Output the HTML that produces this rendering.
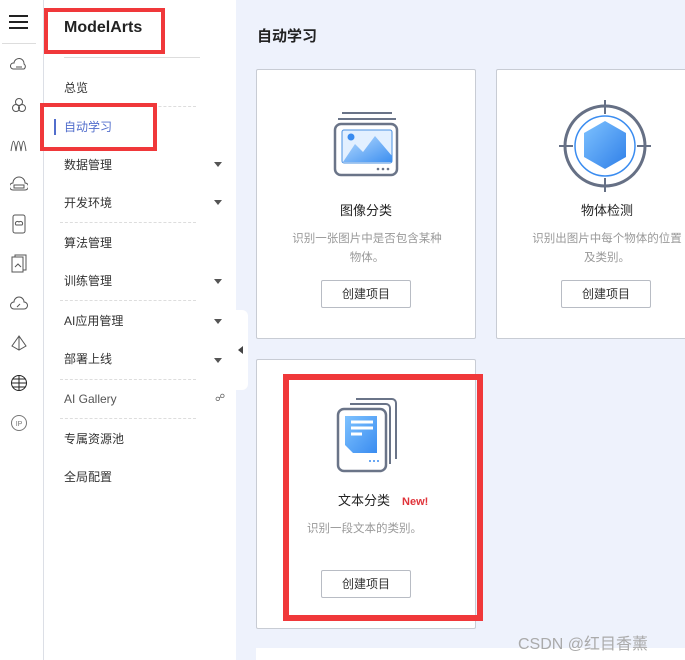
<!DOCTYPE html>
<html><head><meta charset="utf-8"><style>
*{margin:0;padding:0;box-sizing:border-box}
body{width:685px;height:660px;overflow:hidden;position:relative;background:#eef2fc;font-family:"Liberation Sans","Noto Sans CJK SC",sans-serif}
.abs{position:absolute}
.rail{left:0;top:0;width:44px;height:660px;background:#fff;border-right:1px solid #dcdfe6}
.side{left:44px;top:0;width:192px;height:660px;background:#fff}
.mi{position:absolute;left:64px;font-size:12px;color:#333;line-height:16px}
.arr{position:absolute;left:214px;width:0;height:0;border-left:4px solid transparent;border-right:4px solid transparent;border-top:5px solid #555}
.dash{position:absolute;left:60px;width:136px;border-top:1px dashed #ddd}
.card{position:absolute;background:#fff;border:1px solid #c8ccd4;border-radius:2px}
.ct{position:absolute;width:100%;text-align:center;font-size:13px;color:#222}
.cd{position:absolute;text-align:center;font-size:11.5px;color:#999;line-height:19px}
.btn{position:absolute;width:90px;height:28px;border:1px solid #b8bcc4;border-radius:2px;font-size:12px;color:#333;text-align:center;line-height:26px;background:#fff}
.red{position:absolute;border:4px solid #f0383a}
.ic{position:absolute;left:10px}
</style></head><body>
<div class="abs rail">
 <div class="abs" style="left:9px;top:15px;width:19px;height:2px;background:#222"></div>
 <div class="abs" style="left:9px;top:21px;width:19px;height:2px;background:#222"></div>
 <div class="abs" style="left:9px;top:27px;width:19px;height:2px;background:#222"></div>
 <div class="abs" style="left:2px;top:43px;width:34px;border-top:1px solid #ddd"></div>
 <svg class="ic" style="top:56px" width="18" height="18" viewBox="0 0 18 18" fill="none" stroke="#555"><path d="M3 13a3 3 0 0 1 1-6 5 5 0 0 1 10 1 3 3 0 0 1 0 5z"/><path d="M6 11h6"/></svg>
 <svg class="ic" style="top:96px" width="18" height="18" viewBox="0 0 18 18" fill="none" stroke="#555"><circle cx="9" cy="6" r="3.5"/><circle cx="6" cy="12" r="3.5"/><circle cx="12" cy="12" r="3.5"/></svg>
 <svg class="ic" style="top:136px" width="18" height="18" viewBox="0 0 18 18" fill="none" stroke="#555"><path d="M1 15C3 2 4 2 6 15C8 2 9 2 11 15C13 2 14 2 16 15"/></svg>
 <svg class="ic" style="top:176px" width="18" height="18" viewBox="0 0 18 18" fill="none" stroke="#555"><path d="M3 14a3 3 0 0 1 0-7 6 6 0 0 1 12 0 3 3 0 0 1 0 7z"/><rect x="4" y="9" width="10" height="3"/></svg>
 <svg class="ic" style="top:214px" width="18" height="20" viewBox="0 0 18 20" fill="none" stroke="#555"><rect x="3" y="1" width="12" height="18" rx="2"/><path d="M6 11a2 2 0 0 1 3-3 2 2 0 0 1 3 3z"/></svg>
 <svg class="ic" style="top:254px" width="18" height="20" viewBox="0 0 18 20" fill="none" stroke="#555"><rect x="2" y="3" width="11" height="15"/><path d="M5 3V1h11v15h-3"/><path d="M5 13l3-3 3 3"/></svg>
 <svg class="ic" style="top:295px" width="18" height="18" viewBox="0 0 18 18" fill="none" stroke="#555"><path d="M4 14a3 3 0 0 1 0-7 5 5 0 0 1 10 0 3 3 0 0 1 0 7z"/><path d="M7 12l3-3"/></svg>
 <svg class="ic" style="top:334px" width="18" height="18" viewBox="0 0 18 18" fill="none" stroke="#555"><path d="M9 2L2 12l7 4 7-4z"/><path d="M9 2v14"/></svg>
 <svg class="ic" style="top:374px" width="18" height="18" viewBox="0 0 18 18" fill="none" stroke="#222"><circle cx="9" cy="9" r="7.5"/><path d="M1.5 9h15M9 1.5v15M3 5h12M3 13h12"/></svg>
 <svg class="ic" style="top:414px" width="18" height="18" viewBox="0 0 18 18" fill="none" stroke="#777"><circle cx="9" cy="9" r="7.5"/><text x="9" y="12" font-size="7" text-anchor="middle" fill="#777" stroke="none" font-family="Liberation Sans">IP</text></svg>
</div>
<div class="abs side"></div>
<div class="abs" style="left:64px;top:19px;font-size:16px;font-weight:bold;color:#222">ModelArts</div>
<div class="abs" style="left:64px;top:57px;width:136px;border-top:1px solid #ddd"></div>
<div class="mi" style="top:80px">总览</div>
<div class="dash" style="top:106px"></div>
<div class="abs" style="left:54px;top:119px;width:2px;height:16px;background:#526ecc"></div>
<div class="mi" style="top:119px;color:#526ecc">自动学习</div>
<div class="mi" style="top:157px">数据管理</div><div class="arr" style="top:162px"></div>
<div class="mi" style="top:195px">开发环境</div><div class="arr" style="top:200px"></div>
<div class="dash" style="top:222px"></div>
<div class="mi" style="top:235px">算法管理</div>
<div class="mi" style="top:273px">训练管理</div><div class="arr" style="top:279px"></div>
<div class="dash" style="top:300px"></div>
<div class="mi" style="top:313px">AI应用管理</div><div class="arr" style="top:319px"></div>
<div class="mi" style="top:351px">部署上线</div><div class="arr" style="top:358px"></div>
<div class="dash" style="top:379px"></div>
<div class="mi" style="top:391px;color:#555">AI Gallery</div>
<div class="abs" style="left:215px;top:393px;font-size:10px;color:#666">&#9741;</div>
<div class="dash" style="top:418px"></div>
<div class="mi" style="top:431px">专属资源池</div>
<div class="mi" style="top:469px">全局配置</div>
<div class="abs" style="left:232px;top:310px;width:16px;height:80px;background:#fff;border-radius:0 6px 6px 0"></div>
<div class="abs" style="left:238px;top:346px;width:0;height:0;border-top:4px solid transparent;border-bottom:4px solid transparent;border-right:5px solid #444"></div>

<div class="abs" style="left:257px;top:25px;font-size:15px;font-weight:bold;color:#222">自动学习</div>

<div class="card" style="left:256px;top:69px;width:220px;height:270px">
 <svg class="abs" style="left:76px;top:42px" width="66" height="68" viewBox="0 0 66 68"><defs><linearGradient id="g" x1="0" y1="0" x2="1" y2="1"><stop offset="0" stop-color="#b8dcff"/><stop offset="1" stop-color="#3d8ff0"/></linearGradient></defs>
  <path d="M9 1h50M5 7h58" stroke="#6a7488" stroke-width="2"/>
  <rect x="2" y="12" width="62" height="51" rx="6" fill="#fff" stroke="#6a7488" stroke-width="2.5"/>
  <rect x="9" y="18" width="50" height="33" rx="2" fill="#e3f0ff" stroke="#4a90e2"/>
  <path d="M10 50L22 32l8 8 12-16 17 20v6z" fill="url(#g)"/>
  <circle cx="18" cy="25" r="3.5" fill="#3a8cf0"/>
  <circle cx="45" cy="57" r="1.3" fill="#6a7488"/><circle cx="50" cy="57" r="1.3" fill="#6a7488"/><circle cx="55" cy="57" r="1.3" fill="#6a7488"/></svg>
 <div class="ct" style="top:130px">图像分类</div>
 <div class="cd" style="top:160px;left:30px;width:160px">识别一张图片中是否包含某种物体。</div>
 <div class="btn" style="left:64px;top:210px">创建项目</div>
</div>

<div class="card" style="left:496px;top:69px;width:200px;height:270px">
 <svg class="abs" style="left:62px;top:30px" width="92" height="92" viewBox="0 0 92 92">
  <defs><linearGradient id="c" x1="0" y1="0" x2="1" y2="1"><stop offset="0" stop-color="#7ec2ff"/><stop offset="1" stop-color="#2f7fe8"/></linearGradient></defs>
  <circle cx="46" cy="46" r="40" fill="none" stroke="#667085" stroke-width="3"/>
  <circle cx="46" cy="46" r="30" fill="none" stroke="#3a8cf0" stroke-width="1.5"/>
  <path d="M46 0v14M46 78v14M0 46h14M78 46h14" stroke="#667085" stroke-width="2"/>
  <path d="M46 21l21 12v24L46 69 25 57V33z" fill="url(#c)"/>
 </svg>
 <div class="ct" style="top:130px;width:220px">物体检测</div>
 <div class="cd" style="top:160px;left:30px;width:160px">识别出图片中每个物体的位置及类别。</div>
 <div class="btn" style="left:64px;top:210px">创建项目</div>
</div>

<div class="card" style="left:256px;top:359px;width:220px;height:270px">
 <svg class="abs" style="left:79px;top:37px" width="64" height="76" viewBox="0 0 64 76">
  <defs><linearGradient id="d" x1="0" y1="0" x2="1" y2="1"><stop offset="0" stop-color="#7ec2ff"/><stop offset="1" stop-color="#3a8cf0"/></linearGradient></defs>
  <path d="M20 2h36a4 4 0 0 1 4 4v56" fill="none" stroke="#6a7488" stroke-width="2"/>
  <path d="M14 7h36a4 4 0 0 1 4 4v56" fill="none" stroke="#6a7488" stroke-width="2"/>
  <rect x="2" y="12" width="48" height="62" rx="6" fill="#fff" stroke="#6a7488" stroke-width="2.5"/>
  <path d="M9 19h32v37H17l-8-8z" fill="url(#d)"/>
  <path d="M15 25h22M15 31h22M15 37h11" stroke="#fff" stroke-width="3"/>
  <circle cx="34" cy="64" r="1" fill="#3a8cf0"/><circle cx="38" cy="64" r="1" fill="#3a8cf0"/><circle cx="42" cy="64" r="1" fill="#3a8cf0"/>
 </svg>
 <div class="abs" style="top:130px;left:81px;font-size:13px;color:#222">文本分类<span style="color:#e0333a;font-size:11px;font-weight:bold;margin-left:12px">New!</span></div>
 <div class="abs" style="left:50px;top:160px;font-size:11.5px;color:#999">识别一段文本的类别。</div>
 <div class="btn" style="left:64px;top:210px">创建项目</div>
</div>
<div class="abs" style="left:256px;top:648px;width:430px;height:12px;background:#fff"></div>
<div class="abs" style="left:518px;top:630px;font-size:16px;color:#aaa">CSDN @红目香薰</div>

<div class="red" style="left:44px;top:8px;width:121px;height:46px"></div>
<div class="red" style="left:40px;top:103px;width:117px;height:48px"></div>
<div class="red" style="left:283px;top:374px;width:200px;height:247px;border-width:6px"></div>
</body></html>
